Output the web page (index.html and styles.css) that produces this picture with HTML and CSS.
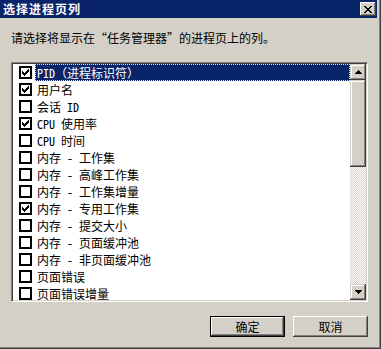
FILE: index.html
```html
<!DOCTYPE html>
<html lang="zh-CN">
<head>
<meta charset="utf-8">
<title>选择进程页列</title>
<link rel="stylesheet" href="styles.css">
</head>
<body>
<div class="dialog">
  <div class="titlebar">
    <span class="title">选择进程页列</span>
    <span class="close">
      <svg width="8" height="7" viewBox="0 0 8 7" shape-rendering="crispEdges"><path d="M0 0h2v1h-2zM6 0h2v1h-2zM1 1h2v1h-2zM5 1h2v1h-2zM2 2h4v1h-4zM3 3h2v1h-2zM2 4h4v1h-4zM1 5h2v1h-2zM5 5h2v1h-2zM0 6h2v1h-2zM6 6h2v1h-2z" fill="#000"/></svg>
    </span>
  </div>
  <div class="content">
    <p class="prompt">请选择将显示在“任务管理器”的进程页上的列。</p>
    <div class="listbox">
      <ul class="items">
        <li class="row"><span class="check on"></span><span class="label selected">PID（进程标识符）</span></li>
        <li class="row"><span class="check on"></span><span class="label">用户名</span></li>
        <li class="row"><span class="check"></span><span class="label">会话 ID</span></li>
        <li class="row"><span class="check on"></span><span class="label">CPU 使用率</span></li>
        <li class="row"><span class="check"></span><span class="label">CPU 时间</span></li>
        <li class="row"><span class="check"></span><span class="label">内存 - 工作集</span></li>
        <li class="row"><span class="check"></span><span class="label">内存 - 高峰工作集</span></li>
        <li class="row"><span class="check"></span><span class="label">内存 - 工作集增量</span></li>
        <li class="row"><span class="check on"></span><span class="label">内存 - 专用工作集</span></li>
        <li class="row"><span class="check"></span><span class="label">内存 - 提交大小</span></li>
        <li class="row"><span class="check"></span><span class="label">内存 - 页面缓冲池</span></li>
        <li class="row"><span class="check"></span><span class="label">内存 - 非页面缓冲池</span></li>
        <li class="row"><span class="check"></span><span class="label">页面错误</span></li>
        <li class="row"><span class="check"></span><span class="label">页面错误增量</span></li>
      </ul>
      <div class="scrollbar">
        <span class="arrow">
          <svg width="7" height="4" viewBox="0 0 7 4" shape-rendering="crispEdges"><path d="M3 0h1v1h-1zM2 1h3v1h-3zM1 2h5v1h-5zM0 3h7v1h-7z" fill="#000"/></svg>
        </span>
        <span class="thumb"></span>
        <span class="track"></span>
        <span class="arrow">
          <svg width="7" height="4" viewBox="0 0 7 4" shape-rendering="crispEdges"><path d="M0 0h7v1h-7zM1 1h5v1h-5zM2 2h3v1h-3zM3 3h1v1h-1z" fill="#000"/></svg>
        </span>
      </div>
    </div>
    <div class="actions">
      <button class="btn default">确定</button>
      <button class="btn">取消</button>
    </div>
  </div>
</div>
</body>
</html>
```
FILE: styles.css
```css
html, body {
  margin: 0;
  padding: 0;
  background: #d4d0c8;
}
body {
  font-family: "Noto Sans CJK SC", "Noto Sans", sans-serif;
  font-size: 12px;
  color: #000;
}
.dialog {
  width: 381px;
  height: 349px;
  box-sizing: border-box;
  padding-right: 4px;
  background: #d4d0c8;
  box-shadow: inset -1px -1px #404040, inset -2px -2px #808080;
  display: flex;
  flex-direction: column;
}
.titlebar {
  height: 18px;
  background: #0a246a;
  display: flex;
  align-items: center;
  justify-content: space-between;
  padding-left: 3px;
  padding-right: 1px;
}
.title {
  color: #fff;
  font-weight: bold;
  font-size: 12px;
  line-height: 18px;
  letter-spacing: 1px;
}
.close {
  width: 16px;
  height: 14px;
  box-sizing: border-box;
  background: #d4d0c8;
  box-shadow: inset -1px -1px #404040, inset 1px 1px #fff, inset -2px -2px #808080;
  display: flex;
  align-items: center;
  justify-content: center;
}
.content {
  padding-left: 11px;
  display: flex;
  flex-direction: column;
}
.prompt {
  margin: 12px 0 0 0;
  line-height: 16px;
  height: 16px;
}
.listbox {
  margin-top: 16px;
  width: 357px;
  height: 240px;
  box-sizing: border-box;
  background: #fff;
  border-style: solid;
  border-width: 1px;
  border-color: #808080 #fff #fff #808080;
  box-shadow: inset 1px 1px #404040, inset -1px -1px #d4d0c8;
  padding: 1px;
  display: flex;
  overflow: hidden;
}
.items {
  list-style: none;
  margin: 0;
  padding: 0;
  flex: 1;
  overflow: hidden;
}
.row {
  height: 17px;
  display: flex;
  align-items: center;
  padding-left: 6px;
}
.check {
  width: 13px;
  height: 13px;
  box-sizing: border-box;
  border: 2px solid #000;
  background: #fff;
  flex: none;
  position: relative;
}
.check.on::after {
  content: "";
  position: absolute;
  left: 1px;
  top: 1px;
  width: 7px;
  height: 7px;
  background:
    linear-gradient(#000, #000) 0 2px / 1px 3px no-repeat,
    linear-gradient(#000, #000) 1px 3px / 1px 3px no-repeat,
    linear-gradient(#000, #000) 2px 4px / 1px 3px no-repeat,
    linear-gradient(#000, #000) 3px 3px / 1px 3px no-repeat,
    linear-gradient(#000, #000) 4px 2px / 1px 3px no-repeat,
    linear-gradient(#000, #000) 5px 1px / 1px 3px no-repeat,
    linear-gradient(#000, #000) 6px 0 / 1px 3px no-repeat;
}
.label {
  margin-left: 3px;
  padding: 0 2px;
  line-height: 17px;
  height: 17px;
  white-space: nowrap;
  font-family: "Noto Sans Mono CJK SC", "Noto Sans CJK SC", sans-serif;
}
.label.selected {
  flex: 1;
  background: #0a246a;
  color: #fff;
  outline: 1px dotted #f3e7a6;
  outline-offset: -1px;
}
.scrollbar {
  width: 16px;
  flex: none;
  display: flex;
  flex-direction: column;
}
.arrow {
  width: 16px;
  height: 16px;
  box-sizing: border-box;
  background: #d4d0c8;
  box-shadow: inset -1px -1px #404040, inset 1px 1px #d4d0c8, inset -2px -2px #808080, inset 2px 2px #fff;
  display: flex;
  align-items: center;
  justify-content: center;
  flex: none;
}
.thumb {
  height: 87px;
  flex: none;
  background: #d4d0c8;
  box-shadow: inset -1px -1px #404040, inset 1px 1px #d4d0c8, inset -2px -2px #808080, inset 2px 2px #fff;
}
.track {
  flex: 1;
  background: repeating-conic-gradient(#fff 0 25%, #d4d0c8 0 50%) 0 0 / 2px 2px;
}
.actions {
  width: 357px;
  margin-top: 14px;
  display: flex;
  justify-content: flex-end;
  gap: 8px;
}
.btn {
  width: 75px;
  height: 21px;
  box-sizing: border-box;
  border: 0;
  padding: 0;
  margin: 0;
  background: #d4d0c8;
  font-family: "Noto Sans CJK SC", "Noto Sans", sans-serif;
  font-size: 12px;
  color: #000;
  box-shadow: inset -1px -1px #404040, inset 1px 1px #fff, inset -2px -2px #808080;
}
.btn.default {
  box-shadow: inset 0 0 0 1px #000, inset -2px -2px #404040, inset 2px 2px #fff, inset -3px -3px #808080;
}
```
